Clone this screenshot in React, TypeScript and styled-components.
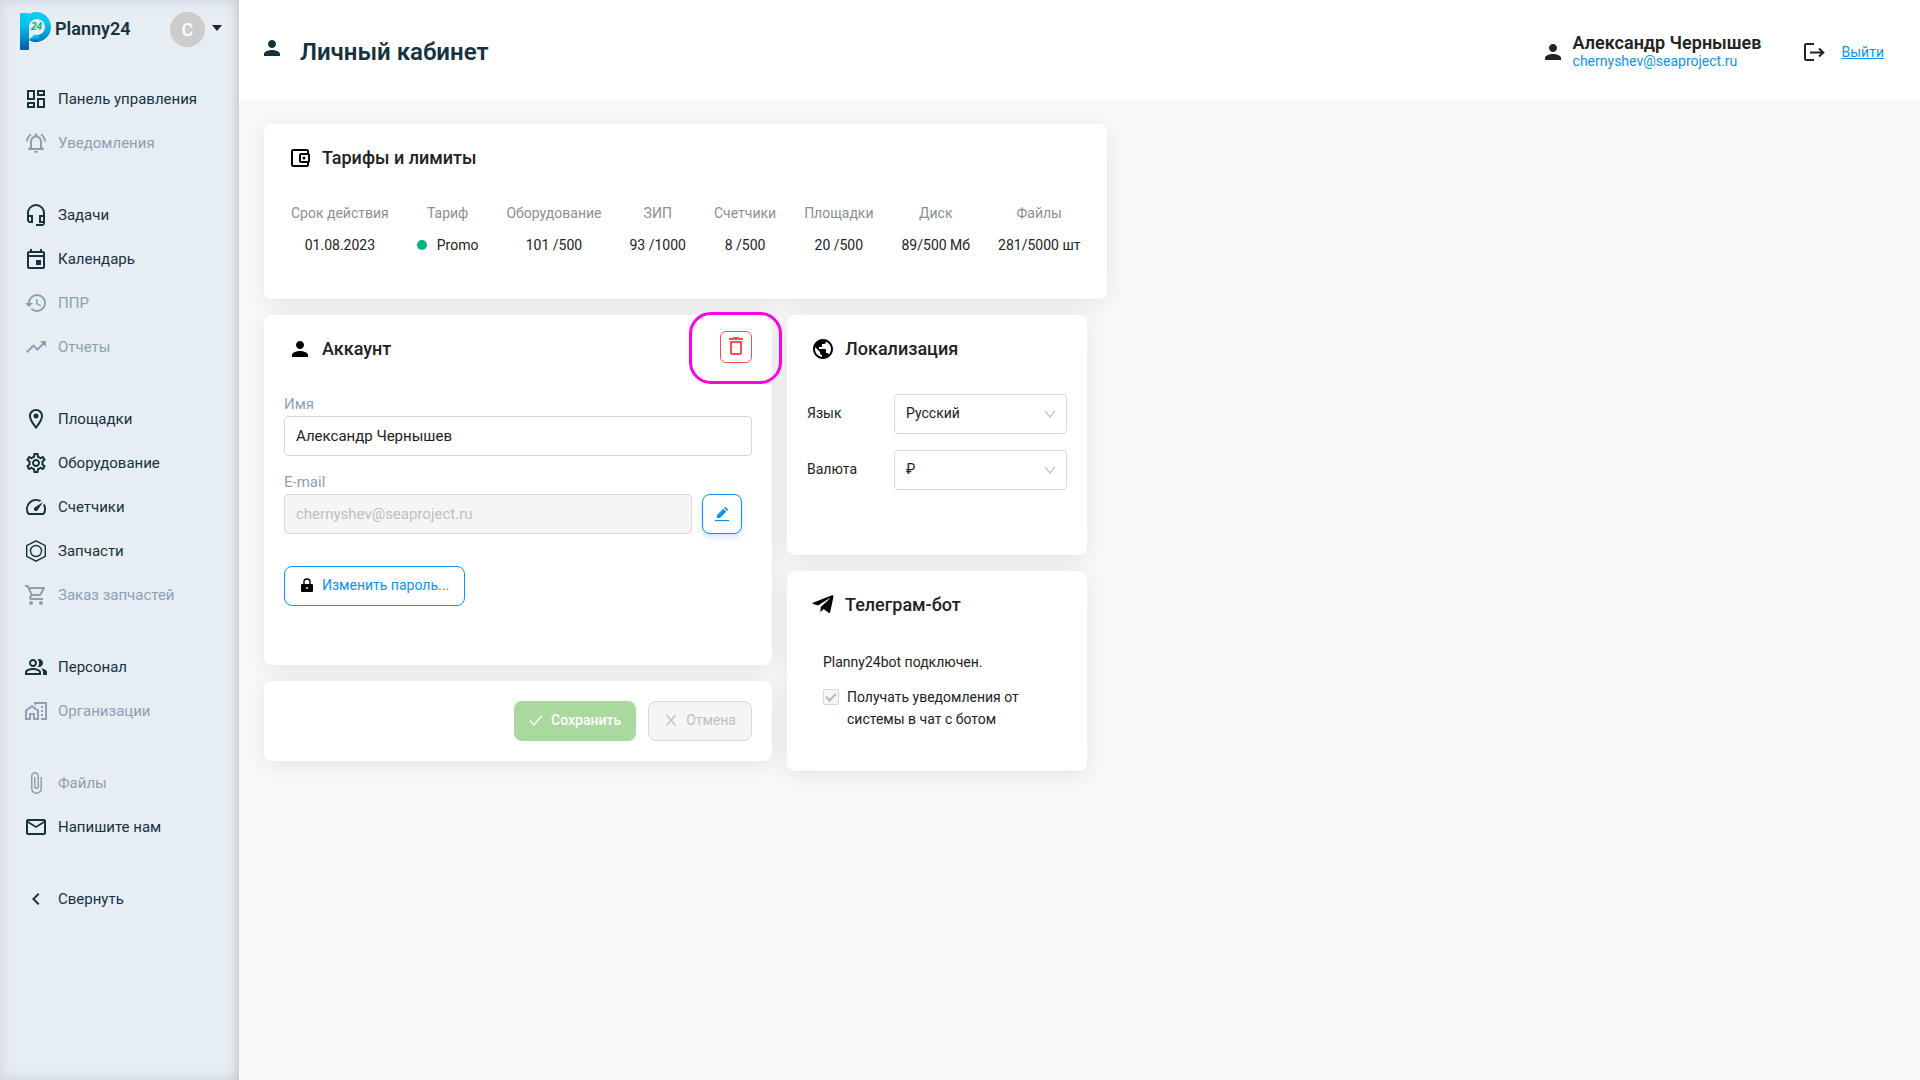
import React from "react";
import styled, { createGlobalStyle, css } from "styled-components";
import {
  MdOutlineDashboard,
  MdOutlineNotificationsActive,
  MdOutlineHeadsetMic,
  MdOutlineEvent,
  MdHistory,
  MdTrendingUp,
  MdOutlineLocationOn,
  MdOutlineSettings,
  MdOutlineSpeed,
  MdOutlineShoppingCart,
  MdOutlinePeopleAlt,
  MdOutlineHomeWork,
  MdAttachFile,
  MdMailOutline,
  MdKeyboardArrowLeft,
  MdPerson,
  MdOutlineAccountBalanceWallet,
  MdPublic,
  MdDeleteOutline,
} from "react-icons/md";
import { FaTelegramPlane } from "react-icons/fa";

const GlobalStyle = createGlobalStyle`
  *, *::before, *::after { box-sizing: border-box; }
  body {
    margin: 0;
    background: #f9f9f9;
    color: #222;
    font: 14px/22px Roboto, "Liberation Sans", sans-serif;
  }
  button, input, select { font: inherit; color: inherit; }
`;

const Page = styled.div`
  display: flex;
  min-height: 100vh;
`;

const Sidebar = styled.aside`
  flex: 0 0 239px;
  background: #e6edf3;
  box-shadow: inset 0 0 16px rgba(0, 0, 0, 0.1), inset -6px 0 8px -4px rgba(60, 70, 80, 0.12);
`;

const Brand = styled.div`
  display: flex;
  align-items: flex-start;
  height: 77px;
  padding: 12px 17px 0 20px;
`;

const BrandName = styled.span`
  margin-left: 4px;
  font-size: 18px;
  line-height: 34px;
  font-weight: 600;
  color: #16323f;
`;

const AccountButton = styled.button`
  display: flex;
  align-items: center;
  gap: 7px;
  margin-left: auto;
  padding: 0;
  border: 0;
  background: none;
`;

const Avatar = styled.span`
  width: 35px;
  border-radius: 50%;
  background: #ccc;
  color: #fff;
  font-size: 18px;
  font-weight: 500;
  line-height: 35px;
`;

const Caret = styled.span`
  margin-bottom: 4px;
  border: 5px solid transparent;
  border-top: 6px solid #222;
  border-bottom: 0;
`;

const Nav = styled.nav`
  display: flex;
  flex-direction: column;
  gap: 28px;
`;

const NavGroup = styled.div`
  display: flex;
  flex-direction: column;
`;

const NavLink = styled.a<{ $muted?: boolean }>`
  display: flex;
  align-items: center;
  gap: 10px;
  height: 44px;
  padding-left: 24px;
  font-size: 15px;
  color: ${(p) => (p.$muted ? "#8f9fb3" : "#16323f")};
  text-decoration: none;
  svg { width: 24px; height: 24px; }
`;

const Main = styled.main`
  flex: 1;
  min-width: 0;
`;

const Header = styled.header`
  display: flex;
  align-items: center;
  height: 100px;
  padding: 4px 36px 0 21px;
  background: #fff;
  svg { width: 24px; height: 24px; flex: none; }
`;

const Title = styled.h1`
  display: flex;
  align-items: flex-start;
  gap: 16px;
  margin: 0 auto 0 0;
  font-size: 24px;
  line-height: 32px;
  font-weight: 600;
  color: #16323f;
`;

const UserInfo = styled.div`
  display: flex;
  align-items: center;
  gap: 8px;
  margin-right: 40px;
`;

const UserText = styled.div`
  display: flex;
  flex-direction: column;
  line-height: 18px;
`;

const UserName = styled.strong`
  font-size: 18px;
  font-weight: 600;
`;

const MailLink = styled.a`
  color: #0b93f6;
  text-decoration: none;
`;

const Logout = styled.div`
  display: flex;
  align-items: center;
  gap: 16px;
  a { color: #0b93f6; text-decoration: underline; }
`;

const Content = styled.div`
  display: flex;
  flex-direction: column;
  align-items: flex-start;
  gap: 16px;
  padding: 24px 25px;
`;

const Columns = styled.div`
  display: flex;
  align-items: flex-start;
  gap: 15px;
`;

const Column = styled.div<{ $width: number }>`
  display: flex;
  flex-direction: column;
  gap: 16px;
  width: ${(p) => p.$width}px;
`;

const Card = styled.section<{ $minHeight: number }>`
  min-height: ${(p) => p.$minHeight}px;
  padding: 16px 20px;
  border-radius: 8px;
  background: #fff;
  box-shadow: 0 4px 24px rgba(0, 0, 0, 0.09);
`;

const CardHead = styled.div`
  display: flex;
  align-items: flex-start;
  justify-content: space-between;
  height: 36px;
`;

const CardTitle = styled.h2`
  display: flex;
  align-items: center;
  gap: 10px;
  margin: 0;
  padding-left: 4px;
  font-size: 18px;
  line-height: 36px;
  font-weight: 500;
  svg { width: 24px; height: 24px; color: #000; }
`;

const LimitsTable = styled.table`
  margin: 21px -7px 0;
  border-collapse: collapse;
  text-align: center;
  white-space: nowrap;
  th, td { height: 32px; padding: 0 14px; font-weight: 400; }
  th { color: #8b8f94; }
`;

const Plan = styled.span`
  display: inline-flex;
  align-items: center;
  gap: 10px;
  &::before {
    content: "";
    width: 10px;
    height: 10px;
    border-radius: 50%;
    background: #00b37f;
  }
`;

const Highlight = styled.div`
  position: relative;
  display: flex;
  &::after {
    content: "";
    position: absolute;
    inset: -19px -30px -21px -31px;
    border: 3px solid #ff00e6;
    border-radius: 22px;
    pointer-events: none;
  }
`;

const boxed = css`
  height: 40px;
  border: 1px solid #d9d9d9;
  border-radius: 4px;
`;

const DeleteButton = styled.button`
  display: grid;
  place-items: center;
  width: 32px;
  height: 32px;
  padding: 0 0 2px;
  border: 1px solid #ff4d4f;
  border-radius: 6px;
  background: #fff;
  color: #ff4d4f;
  svg { width: 24px; height: 24px; }
`;

const Field = styled.div`
  display: flex;
  flex-direction: column;
  margin-top: 15px;
  label { font-size: 15px; line-height: 23px; color: #8ea1b5; }
`;

const Form = styled.form`
  padding-top: 11px;
`;

const FieldRow = styled.div`
  display: flex;
  gap: 10px;
  padding-right: 10px;
`;

const TextInput = styled.input`
  ${boxed}
  width: 100%;
  padding: 0 11px;
  font-size: 15px;
  background: #fff;
  &:disabled { background: #f5f5f5; color: #bfbfbf; }
`;

const EditButton = styled.button`
  display: grid;
  place-items: center;
  flex: 0 0 40px;
  height: 40px;
  padding: 0;
  border: 1px solid #0b93f6;
  border-radius: 8px;
  background: #fff;
  color: #0b93f6;
  box-shadow: 0 3px 6px rgba(11, 120, 246, 0.2);
`;

const Button = styled.button<{ $kind: "outline" | "save" | "cancel" }>`
  display: inline-flex;
  align-items: center;
  gap: 8px;
  height: 40px;
  padding: 0 15px 2px;
  border: 1px solid #0b93f6;
  border-radius: 8px;
  background: #fff;
  color: #0b93f6;
  white-space: nowrap;
  ${(p) => p.$kind === "save" && css`
    border: 0;
    background: #a9d99f;
    color: #fff;
    font-weight: 500;
  `}
  ${(p) => p.$kind === "cancel" && css`
    border-color: #d9d9d9;
    background: #f5f5f5;
    color: #bfbfbf;
  `}
`;

const PasswordRow = styled.div`
  margin-top: 32px;
`;

const Actions = styled.div`
  display: flex;
  justify-content: flex-end;
  gap: 12px;
  padding: 4px 0;
`;

const Options = styled.div`
  display: flex;
  flex-direction: column;
  gap: 16px;
  margin-top: 27px;
`;

const Option = styled.div`
  display: grid;
  grid-template-columns: 87px 1fr;
  align-items: center;
  label { padding-bottom: 2px; }
`;

const SelectBox = styled.div`
  display: grid;
  align-items: center;
  > * { grid-area: 1 / 1; }
  svg { justify-self: end; margin-right: 11px; pointer-events: none; }
`;

const Select = styled.select`
  ${boxed}
  width: 100%;
  padding: 0 11px 2px;
  background: #fff;
  appearance: none;
`;

const BotInfo = styled.div`
  padding: 28px 16px 0;
  p { margin: 0 0 13px; }
`;

const CheckLabel = styled.label`
  display: flex;
  align-items: flex-start;
  gap: 8px;
`;

const CheckBox = styled.input`
  appearance: none;
  flex: 0 0 16px;
  display: grid;
  place-items: center;
  height: 16px;
  margin: 3px 0;
  border: 1px solid #d9d9d9;
  border-radius: 2px;
  background: #f5f5f5;
  &:checked::before {
    content: "";
    width: 10px;
    height: 6px;
    margin-bottom: 2px;
    border: solid #b8b8b8;
    border-width: 0 0 2px 2px;
    rotate: -45deg;
  }
`;

const Logo = () => (
  <svg width="31" height="38" viewBox="0 0 31 38" aria-hidden="true">
    <defs>
      <linearGradient id="logo" x1="0" y1="0" x2="0" y2="1">
        <stop offset="0.1" stopColor="#00cdf5" />
        <stop offset="0.35" stopColor="#00c2ec" />
        <stop offset="0.75" stopColor="#0082c4" />
        <stop offset="0.95" stopColor="#0060b0" />
      </linearGradient>
    </defs>
    <path
      fill="url(#logo)"
      d="M1 1h7q1 0 1 1Q12 0 16 0a15 15 0 0 1 0 30q-4 0-6.500-2l5-5.500a8 8 0 1 0-5.500-7.500V37q0 1-1 1H1q-1 0-1-1V2q0-1 1-1z"
    />
    <path fill="#e6edf3" d="M16.500 7.500a7.700 7.700 0 1 1-1 15.300L9 28V15a7.600 7.600 0 0 1 7.500-7.500z" />
    <path fill="url(#logo)" d="M9 28l5.500-5.600 4 1.600v5.700q-5.500 1-9.500-1.700z" />
    <text x="16.500" y="18" textAnchor="middle" fontSize="10" fontWeight="700" fontStyle="italic" fontFamily="Open Sans, sans-serif" fill="#12b886">
      24
    </text>
  </svg>
);

const NutIcon = () => (
  <svg viewBox="0 0 24 24" fill="none" stroke="currentColor" strokeWidth="1.4">
    <path d="M12 1.800l9.300 4.900v10.600L12 22.200l-9.300-4.900V6.700z" />
    <circle cx="12" cy="12" r="5.500" />
  </svg>
);

const LogoutIcon = () => (
  <svg viewBox="0 0 24 24" fill="none" stroke="currentColor" strokeWidth="2">
    <path d="M12 4H4.500Q3 4 3 5.500v13Q3 20 4.500 20H12" />
    <path d="M8 12.500h13M17 8.500l4.300 4-4.300 4" />
  </svg>
);

const PencilIcon = () => (
  <svg width="16" height="16" viewBox="0 0 16 16" fill="currentColor">
    <path d="M3 9L9.200 2.800l3 3L6 12H3zM10 2l.8-.8q.5-.5 1 0l2 2q.5.500 0 1l-.8.8z" />
    <path d="M1 14h14v1.200H1z" />
  </svg>
);

const LockIcon = () => (
  <svg width="14" height="14" viewBox="0 0 14 14">
    <path d="M4 7V3.500Q4 1 7 1t3 2.500V7" fill="none" stroke="#000" strokeWidth="1.400" />
    <rect x="1" y="6" width="12" height="8" rx="1" fill="#000" />
    <circle cx="7" cy="10" r="1" fill="#fff" />
  </svg>
);

const CheckIcon = () => (
  <svg width="14" height="14" viewBox="0 0 14 14" fill="none" stroke="currentColor" strokeWidth="1.300">
    <path d="M1 7.500l4 4.500L13 2.500" />
  </svg>
);

const CrossIcon = () => (
  <svg width="14" height="14" viewBox="0 0 14 14" fill="none" stroke="currentColor" strokeWidth="1.200">
    <path d="M2.500 2l9 10.500M11.500 2l-9 10.500" />
  </svg>
);

const ArrowIcon = () => (
  <svg width="12" height="12" viewBox="0 0 12 12" fill="none" stroke="#bfbfbf" strokeWidth="1.200">
    <path d="M1.200 2.800L6 9l4.800-6.200" />
  </svg>
);

type NavItem = { icon: React.ComponentType; text: string; muted?: boolean };

const navGroups: NavItem[][] = [
  [
    { icon: MdOutlineDashboard, text: "Панель управления" },
    { icon: MdOutlineNotificationsActive, text: "Уведомления", muted: true },
  ],
  [
    { icon: MdOutlineHeadsetMic, text: "Задачи" },
    { icon: MdOutlineEvent, text: "Календарь" },
    { icon: MdHistory, text: "ППР", muted: true },
    { icon: MdTrendingUp, text: "Отчеты", muted: true },
  ],
  [
    { icon: MdOutlineLocationOn, text: "Площадки" },
    { icon: MdOutlineSettings, text: "Оборудование" },
    { icon: MdOutlineSpeed, text: "Счетчики" },
    { icon: NutIcon, text: "Запчасти" },
    { icon: MdOutlineShoppingCart, text: "Заказ запчастей", muted: true },
  ],
  [
    { icon: MdOutlinePeopleAlt, text: "Персонал" },
    { icon: MdOutlineHomeWork, text: "Организации", muted: true },
  ],
  [
    { icon: MdAttachFile, text: "Файлы", muted: true },
    { icon: MdMailOutline, text: "Напишите нам" },
  ],
  [{ icon: MdKeyboardArrowLeft, text: "Свернуть" }],
];

const limits: [string, React.ReactNode][] = [
  ["Срок действия", "01.08.2023"],
  ["Тариф", <Plan>Promo</Plan>],
  ["Оборудование", "101 /500"],
  ["ЗИП", "93 /1000"],
  ["Счетчики", "8 /500"],
  ["Площадки", "20 /500"],
  ["Диск", "89/500 Мб"],
  ["Файлы", "281/5000 шт"],
];

export default function App() {
  return (
    <Page>
      <GlobalStyle />
      <Sidebar>
        <Brand>
          <Logo />
          <BrandName>Planny24</BrandName>
          <AccountButton type="button">
            <Avatar>C</Avatar>
            <Caret />
          </AccountButton>
        </Brand>
        <Nav>
          {navGroups.map((group, i) => (
            <NavGroup key={i}>
              {group.map(({ icon: Icon, text, muted }) => (
                <NavLink key={text} href="#" $muted={muted}>
                  <Icon />
                  {text}
                </NavLink>
              ))}
            </NavGroup>
          ))}
        </Nav>
      </Sidebar>
      <Main>
        <Header>
          <Title>
            <MdPerson />
            Личный кабинет
          </Title>
          <UserInfo>
            <MdPerson />
            <UserText>
              <UserName>Александр Чернышев</UserName>
              <MailLink href="#">chernyshev@seaproject.ru</MailLink>
            </UserText>
          </UserInfo>
          <Logout>
            <LogoutIcon />
            <a href="#">Выйти</a>
          </Logout>
        </Header>
        <Content>
          <Card $minHeight={175}>
            <CardHead>
              <CardTitle>
                <MdOutlineAccountBalanceWallet />
                Тарифы и лимиты
              </CardTitle>
            </CardHead>
            <LimitsTable>
              <thead>
                <tr>{limits.map(([name]) => <th key={name} scope="col">{name}</th>)}</tr>
              </thead>
              <tbody>
                <tr>{limits.map(([name, value]) => <td key={name}>{value}</td>)}</tr>
              </tbody>
            </LimitsTable>
          </Card>
          <Columns>
            <Column $width={508}>
              <Card $minHeight={350}>
                <CardHead>
                  <CardTitle>
                    <MdPerson />
                    Аккаунт
                  </CardTitle>
                  <Highlight>
                    <DeleteButton type="button" aria-label="Удалить аккаунт">
                      <MdDeleteOutline />
                    </DeleteButton>
                  </Highlight>
                </CardHead>
                <Form>
                  <Field>
                    <label htmlFor="name">Имя</label>
                    <TextInput id="name" defaultValue="Александр Чернышев" />
                  </Field>
                  <Field>
                    <label htmlFor="email">E-mail</label>
                    <FieldRow>
                      <TextInput id="email" defaultValue="chernyshev@seaproject.ru" disabled />
                      <EditButton type="button" aria-label="Изменить e-mail">
                        <PencilIcon />
                      </EditButton>
                    </FieldRow>
                  </Field>
                  <PasswordRow>
                    <Button type="button" $kind="outline">
                      <LockIcon />
                      Изменить пароль...
                    </Button>
                  </PasswordRow>
                </Form>
              </Card>
              <Card $minHeight={80}>
                <Actions>
                  <Button type="button" $kind="save" disabled>
                    <CheckIcon />
                    Сохранить
                  </Button>
                  <Button type="button" $kind="cancel" disabled>
                    <CrossIcon />
                    Отмена
                  </Button>
                </Actions>
              </Card>
            </Column>
            <Column $width={300}>
              <Card $minHeight={240}>
                <CardHead>
                  <CardTitle>
                    <MdPublic />
                    Локализация
                  </CardTitle>
                </CardHead>
                <Options>
                  <Option>
                    <label htmlFor="lang">Язык</label>
                    <SelectBox>
                      <Select id="lang">
                        <option>Русский</option>
                      </Select>
                      <ArrowIcon />
                    </SelectBox>
                  </Option>
                  <Option>
                    <label htmlFor="currency">Валюта</label>
                    <SelectBox>
                      <Select id="currency">
                        <option>₽</option>
                      </Select>
                      <ArrowIcon />
                    </SelectBox>
                  </Option>
                </Options>
              </Card>
              <Card $minHeight={200}>
                <CardHead>
                  <CardTitle>
                    <FaTelegramPlane viewBox="-32 16 512 512" />
                    Телеграм-бот
                  </CardTitle>
                </CardHead>
                <BotInfo>
                  <p>Planny24bot подключен.</p>
                  <CheckLabel>
                    <CheckBox type="checkbox" defaultChecked disabled />
                    <span>Получать уведомления от системы в чат с ботом</span>
                  </CheckLabel>
                </BotInfo>
              </Card>
            </Column>
          </Columns>
        </Content>
      </Main>
    </Page>
  );
}
